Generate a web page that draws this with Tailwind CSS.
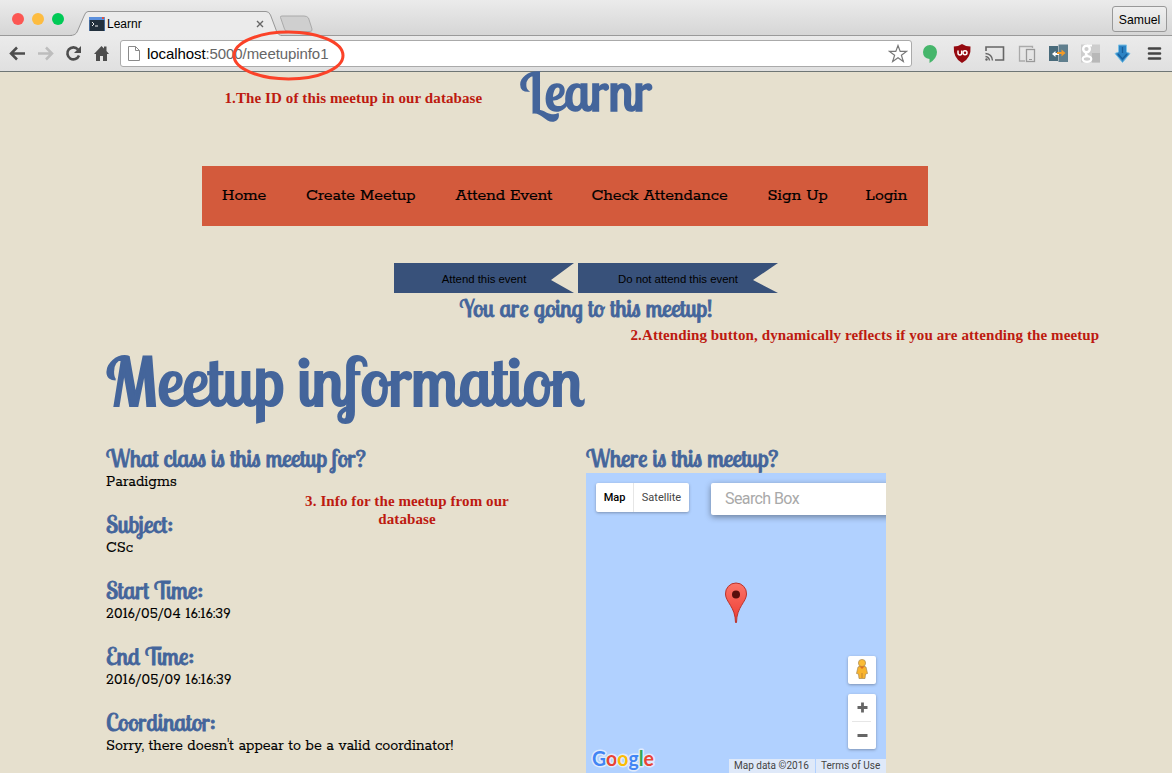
<!DOCTYPE html>
<html lang="en">
<head>
<meta charset="utf-8">
<title>Learnr</title>
<script src="https://cdn.jsdelivr.net/npm/@tailwindcss/browser@4"></script>
</head>
<body class="w-[1172px] h-[773px] overflow-hidden bg-[#e6e0ce] relative text-black">
<!-- Browser window -->
<header class="h-[72px] flex flex-col bg-[#e8e8e8] border-b border-[#6f7675] font-['Liberation_Sans',sans-serif]">
  <div class="h-[36px] flex relative bg-linear-to-b from-[#ebebeb] to-[#d6d6d6] border-b border-[#9a9a9a]">
    <div class="flex gap-2 pl-3 pt-[13px] w-[75px] shrink-0">
      <span class="size-3 rounded-full bg-[#fc5753]"></span><span class="size-3 rounded-full bg-[#fdbc40]"></span><span class="size-3 rounded-full bg-[#00ca56]"></span>
    </div>
    <svg class="absolute left-0 top-0" width="330" height="36" viewBox="0 0 330 36">
      <path d="M280.500 17.500Q280 16 282 16H304Q307 16 308.500 18L312 29Q312.500 31.500 310 31.500H288Q285.500 31.500 284.500 29Z" fill="#cfcfcf" stroke="#aaa"/>
      <path d="M72 36V35Q76 35 77.500 31L84 16Q85.500 11.500 88 11.500H266Q269 11.500 270.500 15L276.500 31Q278 35 281 35V36Z" fill="#ebebeb"/>
      <path d="M70 35.500Q76 35.500 77.500 31L84 16Q85.500 11.500 88 11.500H266Q269 11.500 270.500 15L276.500 31Q278 35.500 282 35.500" fill="none" stroke="#979797"/>
      <rect x="89" y="17" width="16" height="14" fill="#22303c"/><path d="M89 17h16v3H89z" fill="#5b8fdc"/><path d="M102 17h2v2h-2z" fill="#e0503c"/><path d="M89.500 20v11M104.500 20v11" stroke="#456a9a"/>
      <path d="M92 22l2 2-2 2M95 26h3" fill="none" stroke="#eee"/>
      <path d="M257 21l6 6M263 21l-6 6" stroke="#666" stroke-width="1.400"/>
    </svg>
    <div class="relative pl-[32px] pt-[17px] text-xs leading-[14px] whitespace-nowrap">Learnr</div>
    <button class="absolute left-[1112px] top-[6px] w-[55px] h-[26px] rounded-[3px] border border-[#999] bg-linear-to-b from-[#efefef] to-[#dedede] text-[12.200px] leading-[26px] text-center">Samuel</button>
  </div>
  <div class="h-[35px] flex items-center bg-linear-to-b from-[#ebebeb] to-[#e0e0e0]">
    <svg class="shrink-0" width="120" height="35" viewBox="0 36 120 35" fill="none">
      <path d="M11 53.500H25M17 47.500L11 53.500L17 59.500" stroke="#4d4d4d" stroke-width="2.500"/>
      <path d="M38 53.500H52M46 47.500L52 53.500L46 59.500" stroke="#bdbdbd" stroke-width="2.500"/>
      <path d="M78 49.500A6 6 0 1 0 79 55.500" stroke="#4d4d4d" stroke-width="2.600"/><path d="M81 46V53H74Z" fill="#4d4d4d"/>
      <path d="M94 54L101.500 46L104 48.500V46.500H106.500V51L109 54H107V61H103V56H100V61H96V54Z" fill="#4d4d4d"/>
    </svg>
    <div class="w-[792px] h-[27px] rounded-[3px] border border-[#aaa] bg-white flex items-center shrink-0">
      <svg class="ml-[7px] shrink-0" width="12" height="16" fill="none" stroke="#8a8a8a"><path d="M.5.500H7.500L11.500 4.500V14.500H.5ZM7.500.500V4.500H11.500"/></svg>
      <span class="ml-[7px] pt-px text-[15px] leading-5 whitespace-nowrap tracking-[-0.080px]">localhost<span class="text-[#666]">:5000/meetupinfo1</span></span>
      <svg class="ml-auto mr-[3px]" width="20" height="20" viewBox="0 0 20 20" fill="none" stroke="#777" stroke-width="1.200"><path d="M10 1.500L12.200 7.400H18.500L13.400 11.200L15.300 17.400L10 13.700L4.700 17.400L6.600 11.200L1.500 7.400H7.800Z"/></svg>
    </div>
    <svg class="shrink-0" width="260" height="35" viewBox="912 36 260 35" fill="none">
      <path d="M930 45A7 7 0 0 0 923 52Q923 58 929.500 59V63Q937 58.500 937 52A7 7 0 0 0 930 45Z" fill="#46b66b"/>
      <path d="M962 44Q966 46.500 970.500 46.500Q971.500 58 962 63Q953 58 953.800 46.500Q958 46.500 962 44Z" fill="#950a10"/>
      <path d="M958 50.500V53Q958 55 960 55Q961.700 55 961.700 53V50.500" stroke="#fff" stroke-width="1.500"/><circle cx="965" cy="52.700" r="2" stroke="#fff" stroke-width="1.500"/>
      <path d="M986 51V47H1003.500V60H995" stroke="#666" stroke-width="1.600"/><path d="M985.500 53.500Q992 54 992.500 60.500M985.500 56.500Q989 57 989.500 60.500" stroke="#666" stroke-width="1.400"/><circle cx="986.500" cy="59.500" r="1.200" fill="#666"/>
      <path d="M1025 61H1019.500V46.500H1032.500V48" stroke="#aaa" stroke-width="1.300"/><rect x="1026.500" y="49.500" width="8" height="12" stroke="#999" stroke-width="1.300"/><path d="M1029 59.500h3" stroke="#999"/>
      <path d="M1049 46h9v15h-9z" fill="#496b7b"/><path d="M1058.500 44.500h9.500v17.500h-9.500z" fill="#607f8e"/><path d="M1054 54h5" stroke="#fff" stroke-width="2"/><path d="M1055.500 51L1052 54L1055.500 57Z" fill="#fff"/><path d="M1057 53h5" stroke="#f59b26" stroke-width="2"/><path d="M1061.500 49.500L1065.500 53L1061.500 56.500Z" fill="#f59b26"/>
      <path d="M1081 44.500h19v18h-19z" fill="#cdcdcd"/><path d="M1092 53h8v9.500h-8z" fill="#b8b8b8"/><circle cx="1086.500" cy="49" r="3.300" stroke="#fff" stroke-width="2.400"/><path d="M1087 45.500H1092M1087 53Q1084 54.500 1088 55.500" stroke="#fff" stroke-width="2"/><ellipse cx="1087" cy="59" rx="4.300" ry="2.800" stroke="#fff" stroke-width="2.200"/>
      <path d="M1118.500 45H1126.500V52L1130 53.500L1122.500 62.500L1115 53.500L1118.500 52Z" fill="#2b83c4" stroke="#7bc0e4"/><path d="M1122.500 47V53M1118 54L1122.500 59L1127 54" stroke="#185f9c" stroke-width="1.300"/>
      <path d="M1149 48.500h11M1149 53.500h11M1149 58.500h11" stroke="#444" stroke-width="2.600" stroke-linecap="round"/>
    </svg>
  </div>
</header>

<main class="font-['Rokkitt','DejaVu_Serif_Condensed',serif]">
  <h1 class="h-[94px] text-center font-['Lobster_Two','Liberation_Sans_Narrow',sans-serif] text-[#44659b] [-webkit-text-stroke:1.600px_#44659b] text-[54px] leading-[38px]">Learnr</h1>
  <nav class="ml-[202px] w-[726px] h-[60px] bg-[#d35a3c] flex gap-10 px-5 pt-[18px] text-[17.750px] leading-[24px] whitespace-nowrap [-webkit-text-stroke:.200px_#000]">
    <a class="w-11">Home</a><a class="w-[110px]">Create Meetup</a><a class="w-24">Attend Event</a><a class="w-[136px]">Check Attendance</a><a class="w-[58px]">Sign Up</a><a class="w-[43px]">Login</a>
  </nav>
  <div class="mt-[37px] flex gap-1 justify-center font-['Liberation_Sans',sans-serif] text-[11.360px] leading-8 whitespace-nowrap">
    <button class="w-[180px] h-[30px] bg-[#38517a] [clip-path:polygon(0_0,100%_0,157px_17px,100%_100%,0_100%)]">Attend this event</button>
    <button class="w-[200px] h-[30px] bg-[#38517a] [clip-path:polygon(0_0,100%_0,175px_17px,100%_100%,0_100%)]">Do not attend this event</button>
  </div>
  <h3 class="h-[32px] text-center font-['Lobster_Two','Liberation_Sans_Narrow',sans-serif] text-[#44659b] [-webkit-text-stroke:.800px_#44659b] text-[24px] leading-[30px]">You are going to this meetup!</h3>
  <h2 class="mt-[22px] pl-[106px] h-[100px] font-['Lobster_Two','Liberation_Sans_Narrow',sans-serif] text-[#44659b] [-webkit-text-stroke:2px_#44659b] text-[68px] leading-[67px]">Meetup information</h2>
  <div class="flex pl-[106px] text-[16px] leading-[18px]">
    <section class="w-[480px] flex flex-col gap-6 [&_h3]:font-['Lobster_Two','Liberation_Sans_Narrow',sans-serif] [&_h3]:text-[#44659b] [&_h3]:[-webkit-text-stroke:.800px_#44659b] [&_h3]:text-[24px] [&_h3]:leading-[22px] [&_h3]:h-[26px] [&_p]:h-4 [&_p]:[-webkit-text-stroke:.100px_#000]">
      <div><h3>What class is this meetup for?</h3><p>Paradigms</p></div>
      <div><h3>Subject:</h3><p>CSc</p></div>
      <div><h3>Start Time:</h3><p class="tracking-[.120px]">2016/05/04 16:16:39</p></div>
      <div><h3>End Time:</h3><p class="tracking-[.220px]">2016/05/09 16:16:39</p></div>
      <div><h3>Coordinator:</h3><p>Sorry, there doesn't appear to be a valid coordinator!</p></div>
    </section>
    <section>
      <h3 class="h-[26px] font-['Lobster_Two','Liberation_Sans_Narrow',sans-serif] text-[#44659b] [-webkit-text-stroke:.800px_#44659b] text-[24px] leading-[22px]">Where is this meetup?</h3>
      <div class="relative w-[300px] h-[300px] overflow-hidden bg-[#b1d1ff] font-['Roboto',sans-serif] text-[11px]">
        <div class="absolute left-[10px] top-[10px] w-[93px] h-[29px] bg-white rounded-[2px] shadow-[0_1px_3px_rgba(0,0,0,.3)] flex leading-[29px] text-center text-[#444]">
          <span class="w-[38px] font-medium text-black border-r border-[#e6e6e6]">Map</span><span class="flex-1">Satellite</span>
        </div>
        <div class="absolute left-[125px] top-[10px] w-[200px] h-[32px] bg-white rounded-[2px] shadow-[0_2px_6px_rgba(0,0,0,.4)] pl-[14px] text-[16px] tracking-[-.600px] leading-8 text-[#a9a9a9]">Search Box</div>
        <svg class="absolute left-[138px] top-[109px]" width="24" height="42" viewBox="0 0 24 42"><defs><linearGradient id="pin" x2="0" y2="1"><stop stop-color="#fb7569"/><stop offset="1" stop-color="#ee3a30"/></linearGradient></defs><path d="M12 1A10.500 10.500 0 0 0 1.500 12C1.500 20 11.500 25 11.500 40.500H12.500C12.500 25 22.500 20 22.500 12A10.500 10.500 0 0 0 12 1Z" fill="url(#pin)" stroke="#b9342c"/><circle cx="12" cy="12.500" r="4" fill="#590f0c"/></svg>
        <div class="absolute left-[262px] top-[183px] size-7 bg-white rounded-[2px] shadow-[0_1px_3px_rgba(0,0,0,.3)]">
          <svg width="28" height="28"><path d="M10 11Q14 8.500 18 11L19.500 17.500L17.500 18L17 22.500H11L10.500 18L8.500 17.500Z" fill="#f9b42d" stroke="#a88a55" stroke-width=".7"/><circle cx="14" cy="7" r="3.600" fill="#fbbc35" stroke="#a88a55" stroke-width=".7"/><path d="M11.500 10.500H16.500L14 13Z" fill="#e0701f"/><path d="M14 17v5" stroke="#c5842c"/></svg>
        </div>
        <div class="absolute left-[262px] top-[221px] w-7 h-[55px] bg-white rounded-[2px] shadow-[0_1px_3px_rgba(0,0,0,.3)]">
          <svg width="28" height="55"><path d="M9.500 13.500h10M14.500 8.500v10M9.500 41.500h10" stroke="#666" stroke-width="2.800"/><path d="M4 27.500h19" stroke="#e6e6e6"/></svg>
        </div>
        <svg class="absolute left-[2px] top-[271px]" width="76" height="29"><text x="4" y="22" textLength="62" lengthAdjust="spacingAndGlyphs" font-family="Lato, sans-serif" font-size="20" font-weight="700" stroke="#e0ebfc" stroke-width="3" paint-order="stroke" stroke-linejoin="round"><tspan fill="#4285f4">G</tspan><tspan fill="#ea4335">o</tspan><tspan fill="#fbbc05">o</tspan><tspan fill="#4285f4">g</tspan><tspan fill="#34a853">l</tspan><tspan fill="#ea4335">e</tspan></text></svg>
        <div class="absolute right-0 bottom-0 flex gap-px h-[14px] text-[10px] leading-[14px] text-[#444] whitespace-nowrap">
          <span class="w-[86px] pl-[5px] bg-[#dfe9f9]">Map data ©2016</span><span class="w-[70px] pl-[5px] bg-[#dfe9f9]">Terms of Use</span>
        </div>
      </div>
    </section>
  </div>
</main>

<!-- Annotations -->
<div class="font-['Liberation_Serif',serif] font-bold text-[15px] leading-[18px] tracking-[0.100px] text-[#bd1a10] whitespace-nowrap">
  <svg class="absolute left-[228px] top-[26px]" width="120" height="58"><ellipse cx="60.500" cy="29.500" rx="54.500" ry="23.500" fill="none" stroke="#fb4228" stroke-width="3"/></svg>
  <p class="absolute left-[224.500px] top-[89px]">1.The ID of this meetup in our database</p>
  <p class="absolute left-[630.500px] top-[326px]">2.Attending button, dynamically reflects if you are attending the meetup</p>
  <p class="absolute left-[305px] top-[492px] w-[204px] text-center">3. Info for the meetup from our<br>database</p>
</div>
</body>
</html>
